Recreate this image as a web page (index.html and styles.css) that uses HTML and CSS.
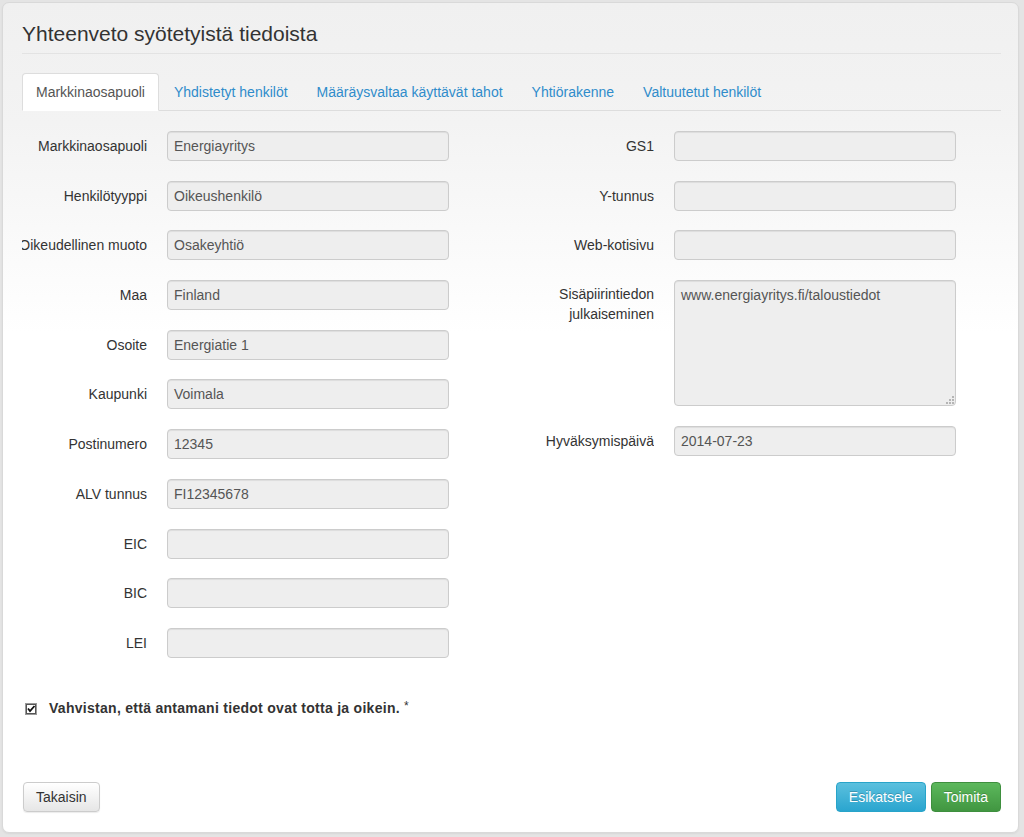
FILE: index.html
```html
<!DOCTYPE html>
<html lang="fi">
<head>
<meta charset="utf-8">
<title>Yhteenveto syötetyistä tiedoista</title>
<link rel="stylesheet" href="styles.css">
</head>
<body>
<div class="panel">
  <h1 class="title">Yhteenveto syötetyistä tiedoista</h1>
  <hr class="sep">
  <ul class="tabs">
    <li class="tab active"><a>Markkinaosapuoli</a></li>
    <li class="tab"><a>Yhdistetyt henkilöt</a></li>
    <li class="tab"><a>Määräysvaltaa käyttävät tahot</a></li>
    <li class="tab"><a>Yhtiörakenne</a></li>
    <li class="tab"><a>Valtuutetut henkilöt</a></li>
  </ul>

  <div class="form">
    <div class="col">
      <div class="row"><div class="label"><span>Markkinaosapuoli</span></div><div class="input">Energiayritys</div></div>
      <div class="row"><div class="label"><span>Henkilötyyppi</span></div><div class="input">Oikeushenkilö</div></div>
      <div class="row"><div class="label"><span>Oikeudellinen muoto</span></div><div class="input">Osakeyhtiö</div></div>
      <div class="row"><div class="label"><span>Maa</span></div><div class="input">Finland</div></div>
      <div class="row"><div class="label"><span>Osoite</span></div><div class="input">Energiatie 1</div></div>
      <div class="row"><div class="label"><span>Kaupunki</span></div><div class="input">Voimala</div></div>
      <div class="row"><div class="label"><span>Postinumero</span></div><div class="input">12345</div></div>
      <div class="row"><div class="label"><span>ALV tunnus</span></div><div class="input">FI12345678</div></div>
      <div class="row"><div class="label"><span>EIC</span></div><div class="input"></div></div>
      <div class="row"><div class="label"><span>BIC</span></div><div class="input"></div></div>
      <div class="row"><div class="label"><span>LEI</span></div><div class="input"></div></div>
    </div>
    <div class="col">
      <div class="row"><div class="label"><span>GS1</span></div><div class="input"></div></div>
      <div class="row"><div class="label"><span>Y-tunnus</span></div><div class="input"></div></div>
      <div class="row"><div class="label"><span>Web-kotisivu</span></div><div class="input"></div></div>
      <div class="row"><div class="label wrap"><span>Sisäpiirintiedon julkaiseminen</span></div><div class="input textarea">www.energiayritys.fi/taloustiedot<svg class="grip" width="9" height="9" viewBox="0 0 9 9"><g fill="#b5b5b5"><rect x="7" y="1" width="2" height="2"/><rect x="4" y="4" width="2" height="2"/><rect x="7" y="4" width="2" height="2"/><rect x="1" y="7" width="2" height="2"/><rect x="4" y="7" width="2" height="2"/><rect x="7" y="7" width="2" height="2"/></g></svg></div></div>
      <div class="row"><div class="label"><span>Hyväksymispäivä</span></div><div class="input">2014-07-23</div></div>
    </div>
  </div>

  <div class="confirm">
    <svg class="check" width="12" height="12" viewBox="0 0 12 12"><rect x="0.5" y="0.5" width="11" height="11" fill="#fff" stroke="#333" stroke-dasharray="1 1"/><rect x="1.5" y="1.5" width="9" height="9" fill="#fff" stroke="#555"/><path d="M3 5.5 L5 8 L9.5 3" fill="none" stroke="#111" stroke-width="1.8"/></svg>
    <span class="confirm-text">Vahvistan, että antamani tiedot ovat totta ja oikein.</span><span class="req">*</span>
  </div>

  <div class="actions">
    <button class="btn btn-default">Takaisin</button>
    <div class="right">
      <button class="btn btn-info">Esikatsele</button>
      <button class="btn btn-success">Toimita</button>
    </div>
  </div>
</div>
</body>
</html>
```

FILE: styles.css
```css
html, body {
  margin: 0;
  padding: 0;
}
body {
  background: #e4e4e4;
  font-family: "Liberation Sans", Arial, sans-serif;
  font-size: 14px;
  color: #333;
  width: 1024px;
  height: 837px;
  overflow: hidden;
}
.panel {
  box-sizing: border-box;
  margin: 2px 0 0 2px;
  width: 1017px;
  height: 831px;
  border: 1px solid #d9d9d9;
  border-radius: 7px;
  background: linear-gradient(to bottom, #f0f0f0 0, #f3f3f3 120px, #ffffff 330px, #ffffff 100%);
  padding: 0 17px 0 19px;
  box-shadow: 0 1px 2px rgba(0,0,0,0.06);
}
.title {
  margin: 0;
  padding-top: 19px;
  font-size: 21px;
  line-height: 24px;
  font-weight: normal;
  color: #333;
}
.sep {
  margin: 7px 0 0 0;
  border: 0;
  border-top: 1px solid #e3e3e3;
  height: 0;
}
.tabs {
  list-style: none;
  margin: 19px 0 0 0;
  padding: 0;
  display: flex;
  border-bottom: 1px solid #dddddd;
}
.tab {
  margin: 0 1px -1px 0;
}
.tab a {
  display: block;
  padding: 8px 13px 8px 13px;
  line-height: 20px;
  color: #2f8ccb;
  border: 1px solid transparent;
  border-radius: 4px 4px 0 0;
}
.tab.active a {
  color: #555;
  background: #fff;
  border-color: #dddddd;
  border-bottom-color: transparent;
}
.form {
  display: grid;
  grid-template-columns: 427px 427px;
  column-gap: 80px;
  margin-top: 20px;
}
.col {
  display: flex;
  flex-direction: column;
  gap: 19.7px;
}
.row {
  display: grid;
  grid-template-columns: 125px 282px;
  column-gap: 20px;
  align-items: start;
}
.label {
  display: flex;
  justify-content: flex-end;
  overflow: hidden;
  white-space: nowrap;
  line-height: 20px;
  padding-top: 5px;
  color: #333;
}
.label.wrap {
  white-space: normal;
  text-align: right;
  padding-top: 4px;
}
.input {
  box-sizing: border-box;
  height: 30px;
  background: #eeeeee;
  border: 1px solid #cccccc;
  border-radius: 4px;
  box-shadow: inset 0 1px 1px rgba(0,0,0,0.075);
  padding: 4px 6px;
  line-height: 20px;
  color: #555;
}
.input.textarea {
  height: 126px;
  position: relative;
}
.grip {
  position: absolute;
  right: 1px;
  bottom: 1px;
}
.confirm {
  display: flex;
  align-items: center;
  margin-top: 42px;
  padding-left: 3px;
}
.check {
  flex: none;
  margin-right: 12px;
  margin-top: 2px;
}
.confirm-text {
  font-weight: bold;
  color: #333;
  letter-spacing: 0.28px;
}
.req {
  font-size: 12px;
  margin-left: 4px;
  align-self: flex-start;
  margin-top: -1px;
  color: #333;
}
.actions {
  display: flex;
  justify-content: space-between;
  align-items: center;
  margin-top: 66px;
  padding-left: 1px;
}
.right {
  display: flex;
  gap: 5px;
}
.btn {
  font-family: "Liberation Sans", Arial, sans-serif;
  font-size: 14px;
  line-height: 20px;
  height: 30px;
  padding: 4px 12px;
  border-radius: 4px;
  border: 1px solid #cccccc;
  box-sizing: border-box;
  cursor: pointer;
}
.btn-default {
  color: #333;
  background: linear-gradient(to bottom, #ffffff 0, #e6e6e6 100%);
  border-color: #cccccc;
  box-shadow: 0 1px 1px rgba(0,0,0,0.08);
}
.btn-info {
  color: #fff;
  background: linear-gradient(to bottom, #5bc0de 0, #2aa5cf 100%);
  border-color: #28a4c9;
  text-shadow: 0 -1px 0 rgba(0,0,0,0.2);
}
.btn-success {
  color: #fff;
  background: linear-gradient(to bottom, #5cb85c 0, #419641 100%);
  border-color: #3e8f3e;
  text-shadow: 0 -1px 0 rgba(0,0,0,0.2);
}
```
